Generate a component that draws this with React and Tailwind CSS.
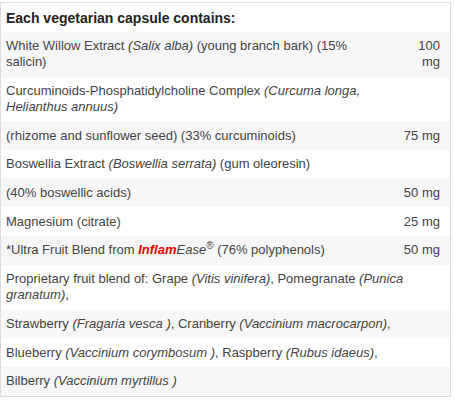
import React from 'react';

// 成分表的每一行：text 为左侧描述，amount 为右侧剂量（null 表示整行文字）
const rows = [
  {
    text: (
      <>
        White Willow Extract <i>(Salix alba)</i> (young branch bark) (15% salicin)
      </>
    ),
    amount: '100 mg',
  },
  {
    text: (
      <>
        Curcuminoids-Phosphatidylcholine Complex <i>(Curcuma longa, Helianthus annuus)</i>
      </>
    ),
    amount: '',
  },
  { text: '(rhizome and sunflower seed) (33% curcuminoids)', amount: '75 mg' },
  {
    text: (
      <>
        Boswellia Extract <i>(Boswellia serrata)</i> (gum oleoresin)
      </>
    ),
    amount: '',
  },
  { text: '(40% boswellic acids)', amount: '50 mg' },
  { text: 'Magnesium (citrate)', amount: '25 mg' },
  {
    text: (
      <>
        *Ultra Fruit Blend from{' '}
        <i className="font-bold text-[#e00000]">Inflam</i>
        <i>Ease</i>
        <sup className="text-[10px] leading-none">®</sup> (76% polyphenols)
      </>
    ),
    amount: '50 mg',
  },
  {
    text: (
      <>
        Proprietary fruit blend of: Grape <i>(Vitis vinifera)</i>, Pomegranate <i>(Punica granatum)</i>,
      </>
    ),
    amount: null,
  },
  {
    text: (
      <>
        Strawberry <i>(Fragaria vesca )</i>, Cranberry <i>(Vaccinium macrocarpon)</i>,
      </>
    ),
    amount: null,
  },
  {
    text: (
      <>
        Blueberry <i>(Vaccinium corymbosum )</i>, Raspberry <i>(Rubus idaeus)</i>,
      </>
    ),
    amount: null,
  },
  {
    text: (
      <>
        Bilberry <i>(Vaccinium myrtillus )</i>
      </>
    ),
    amount: null,
  },
];

const App = () => {
  return (
    <div className="w-[455px] h-[406px] bg-white pt-[2px] font-['Liberation_Sans',Arial,sans-serif]">
      <div className="w-[451px] border border-[#dcdcdc] text-[13px] leading-[16px] text-[#444]">
        <div className="px-[5px] pt-[7px] pb-[6px] text-[14px] leading-[16px] font-bold text-[#222]">
          Each vegetarian capsule contains:
        </div>
        {rows.map((row, i) => (
          <div
            key={i}
            className={`flex gap-[10px] pl-[5px] pr-[10px] py-[6.35px] ${i % 2 === 0 ? 'bg-[#f7f7f7]' : 'bg-white'}`}
          >
            <div className="flex-1">{row.text}</div>
            {row.amount !== null && <div className="w-[40px] text-right">{row.amount}</div>}
          </div>
        ))}
      </div>
    </div>
  );
};

export default App;
